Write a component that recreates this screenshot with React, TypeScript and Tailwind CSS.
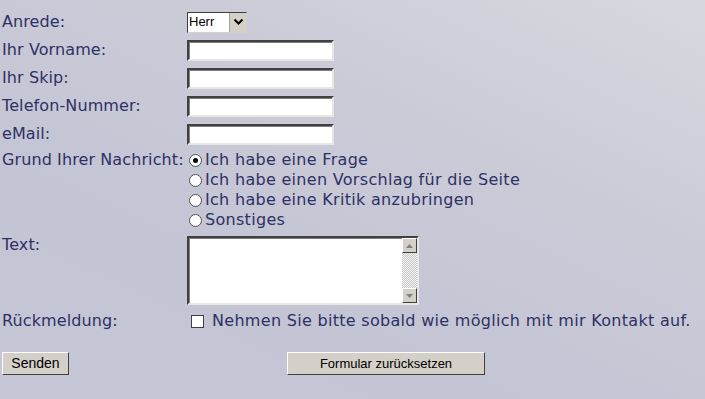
import React from "react";

const labelCls = "w-[185px] shrink-0 pl-[2px]";

function TextInput() {
  return (
    <div className="w-[147px] h-[21px] bg-white border-2 border-t-[#404040] border-l-[#404040] border-r-[#e8e6e0] border-b-[#e8e6e0] shadow-[inset_1px_1px_0_#808080]" />
  );
}

function Radio({ checked }: { checked?: boolean }) {
  return (
    <span className="w-[13px] h-[13px] rounded-full bg-white border border-[#505050] flex items-center justify-center shrink-0 mr-[3px] ml-[4px]">
      {checked && <span className="w-[5px] h-[5px] rounded-full bg-black" />}
    </span>
  );
}

export default function App() {
  return (
    <div
      className="w-[705px] h-[399px] overflow-hidden text-[16px] tracking-[0.1px] text-[#2e3163] bg-[linear-gradient(205deg,#d8d8df_0%,#cbcbd8_35%,#c3c4d4_70%,#c6c7d6_100%)]"
      style={{ fontFamily: '"DejaVu Sans", Verdana, sans-serif' }}
    >
      <div className="pt-[8px]">
        <div className="flex items-center h-[28px]">
          <div className={labelCls}>Anrede:</div>
          <div className="ml-[2px] flex h-[21px] w-[60px] border border-[#404040] border-r-[#d4d0c8] border-b-[#d4d0c8] bg-white tracking-normal">
            <div
              className="flex-1 flex items-center pl-[1px] text-[13px] text-black"
              style={{ fontFamily: '"Liberation Sans", Arial, sans-serif' }}
            >
              Herr
            </div>
            <div className="w-[17px] bg-[#d4d0c8] flex items-center justify-center border-l border-[#a0a0a0]">
              <svg width="11" height="8" viewBox="0 0 11 8">
                <path d="M1.5 1.5 L5.5 5.5 L9.5 1.5" stroke="#000" strokeWidth="2" fill="none" />
              </svg>
            </div>
          </div>
        </div>
        {["Ihr Vorname:", "Ihr Skip:", "Telefon-Nummer:", "eMail:"].map((l) => (
          <div key={l} className="flex items-center h-[28px]">
            <div className={labelCls}>{l}</div>
            <div className="ml-[2px]">
              <TextInput />
            </div>
          </div>
        ))}
        <div className="flex mt-[2px]">
          <div className={labelCls + " h-[20px] flex items-center"}>Grund Ihrer Nachricht:</div>
          <div className="flex flex-col tracking-[0.3px]">
            {[
              ["Ich habe eine Frage", true],
              ["Ich habe einen Vorschlag für die Seite", false],
              ["Ich habe eine Kritik anzubringen", false],
              ["Sonstiges", false],
            ].map(([t, c]) => (
              <div key={t as string} className="flex items-center h-[20px]">
                <Radio checked={c as boolean} />
                <span>{t as string}</span>
              </div>
            ))}
          </div>
        </div>
        <div className="flex mt-[6px]">
          <div className={labelCls + " leading-[18px]"}>Text:</div>
          <div className="ml-[2px] w-[232px] h-[69px] flex bg-white border-2 border-t-[#404040] border-l-[#404040] border-r-[#e8e6e0] border-b-[#e8e6e0] shadow-[inset_1px_1px_0_#808080]">
            <div className="flex-1" />
            <div className="w-[15px] flex flex-col bg-[repeating-conic-gradient(#c8c8c8_0_25%,#f4f4f4_0_50%)] bg-[length:2px_2px]">
              <div className="h-[15px] bg-[#d4d0c8] border border-t-white border-l-white border-r-[#404040] border-b-[#404040] flex items-center justify-center">
                <svg width="7" height="4" viewBox="0 0 7 4">
                  <path d="M0 4 L3.5 0 L7 4 Z" fill="#808080" />
                </svg>
              </div>
              <div className="flex-1" />
              <div className="h-[15px] bg-[#d4d0c8] border border-t-white border-l-white border-r-[#404040] border-b-[#404040] flex items-center justify-center">
                <svg width="7" height="4" viewBox="0 0 7 4">
                  <path d="M0 0 L3.5 4 L7 0 Z" fill="#808080" />
                </svg>
              </div>
            </div>
          </div>
        </div>
        <div className="flex items-center h-[20px] mt-[6px]">
          <div className={labelCls}>Rückmeldung:</div>
          <span className="ml-[6px] w-[13px] h-[13px] bg-white border border-[#404040] shrink-0" />
          <span className="ml-[8px] tracking-[0.3px]">Nehmen Sie bitte sobald wie möglich mit mir Kontakt auf.</span>
        </div>
        <div
          className="flex items-center mt-[21px] text-black tracking-normal"
          style={{ fontFamily: '"Liberation Sans", Arial, sans-serif' }}
        >
          <div className="ml-[2px] w-[67px] h-[23px] bg-[#d4d0c8] border border-t-white border-l-white border-r-[#404040] border-b-[#404040] flex items-center justify-center text-[14px]">
            Senden
          </div>
          <div className="ml-[218px] w-[198px] h-[23px] bg-[#d4d0c8] border border-t-white border-l-white border-r-[#404040] border-b-[#404040] flex items-center justify-center text-[13px]">
            Formular zurücksetzen
          </div>
        </div>
      </div>
    </div>
  );
}
